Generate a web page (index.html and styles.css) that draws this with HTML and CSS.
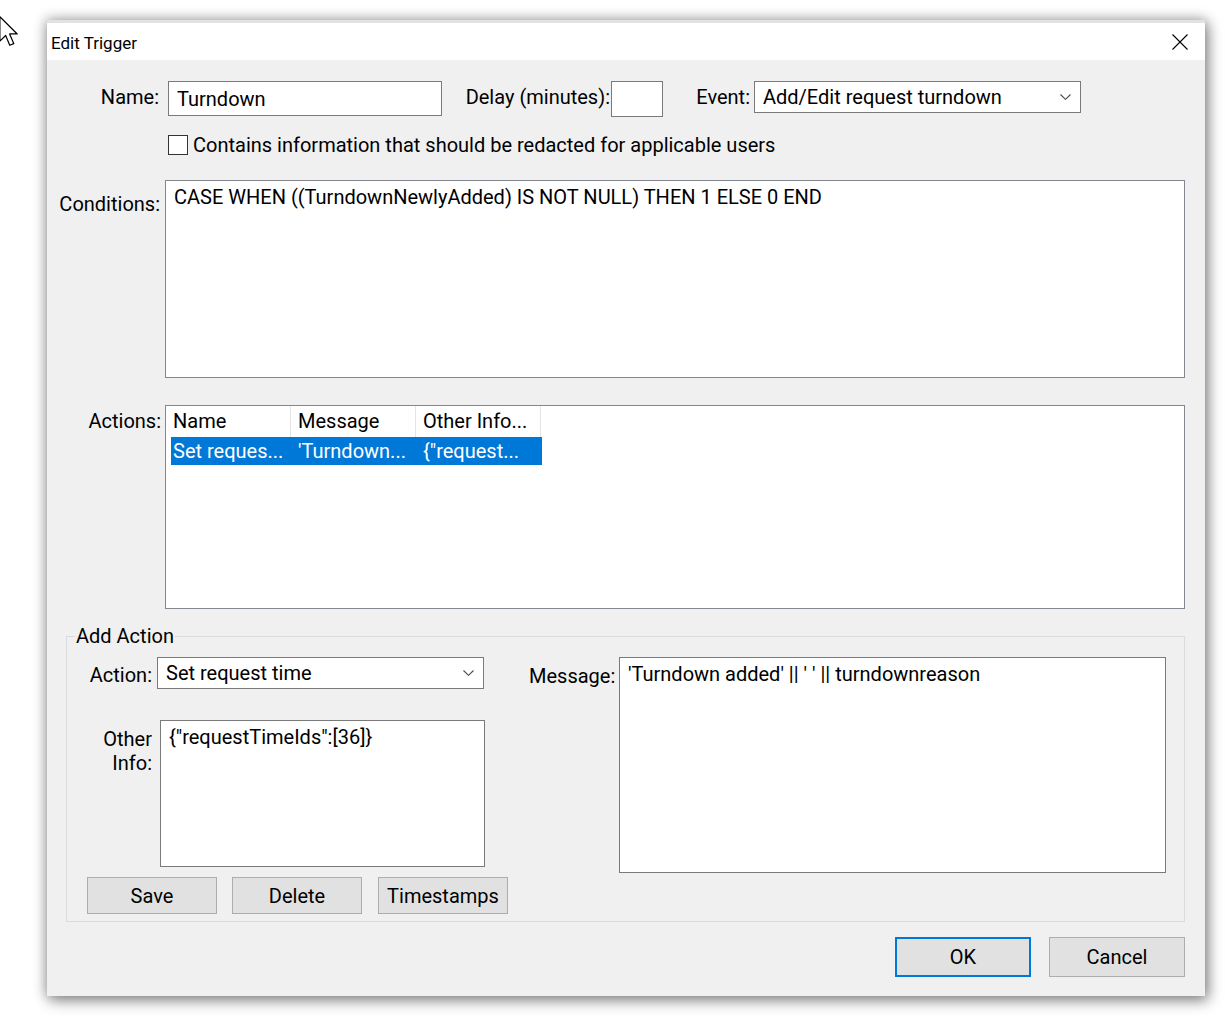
FILE: index.html
```html
<!DOCTYPE html>
<html lang="en">
<head>
    <meta charset="UTF-8">
    <meta name="viewport" content="width=device-width, initial-scale=1.0">
    <title>Edit Trigger</title>
    <link rel="stylesheet" href="styles.css">
</head>
<body>
    <!-- Mouse pointer resting at the screen edge -->
    <svg class="cursor" width="20" height="32" viewBox="0 0 13 21">
        <path d="M0.5 0.5 L0.5 16.5 L4.3 12.8 L7 19.2 L9.6 18.1 L6.9 11.8 L11.9 11.8 Z" fill="#fff" stroke="#000" stroke-width="0.8" stroke-linejoin="round"/>
    </svg>

    <div class="window">
        <div class="titlebar">
            <span class="title">Edit Trigger</span>
            <svg class="close" width="16" height="16" viewBox="0 0 16 16">
                <path d="M0.5 0.5 L15.5 15.5 M15.5 0.5 L0.5 15.5" stroke="#000" stroke-width="1.1"/>
            </svg>
        </div>

        <div class="client">
            <!-- Name / delay / event -->
            <div class="row-top">
                <label class="lbl lbl-name">Name:</label>
                <div class="textbox tb-name">Turndown</div>
                <label class="lbl lbl-delay">Delay (minutes):</label>
                <div class="textbox tb-delay"></div>
                <label class="lbl lbl-event">Event:</label>
                <div class="combo combo-event">
                    <span>Add/Edit request turndown</span>
                    <svg class="chevron" width="11" height="6" viewBox="0 0 11 6"><path d="M0.5 0.5 L5.5 5.3 L10.5 0.5" fill="none" stroke="#4a4a4a" stroke-width="1.1"/></svg>
                </div>
            </div>

            <div class="row-check">
                <span class="checkbox"></span>
                <span>Contains information that should be redacted for applicable users</span>
            </div>

            <div class="row-field row-conditions">
                <label class="lbl lbl-side">Conditions:</label>
                <div class="textarea tb-conditions">CASE WHEN ((TurndownNewlyAdded) IS NOT NULL) THEN 1 ELSE 0 END</div>
            </div>

            <div class="row-field row-actions">
                <label class="lbl lbl-side lbl-actions">Actions:</label>
                <div class="listview">
                    <div class="list-header">
                        <div class="col-head">Name</div>
                        <div class="col-head">Message</div>
                        <div class="col-head">Other Info...</div>
                    </div>
                    <div class="list-row selected">
                        <div class="cell">Set reques...</div>
                        <div class="cell">'Turndown...</div>
                        <div class="cell">{"request...</div>
                    </div>
                </div>
            </div>

            <fieldset class="group">
                <legend>Add Action</legend>
                <div class="group-cols">
                    <div class="group-left">
                        <div class="field field-action">
                            <label class="lbl lbl-group">Action:</label>
                            <div class="combo combo-action">
                                <span>Set request time</span>
                                <svg class="chevron" width="11" height="6" viewBox="0 0 11 6"><path d="M0.5 0.5 L5.5 5.3 L10.5 0.5" fill="none" stroke="#4a4a4a" stroke-width="1.1"/></svg>
                            </div>
                        </div>
                        <div class="field field-other">
                            <label class="lbl lbl-group lbl-other">Other<br>Info:</label>
                            <div class="textarea tb-other">{"requestTimeIds":[36]}</div>
                        </div>
                        <div class="group-buttons">
                            <button class="btn">Save</button>
                            <button class="btn">Delete</button>
                            <button class="btn btn-wide-gap">Timestamps</button>
                        </div>
                    </div>
                    <div class="group-right">
                        <label class="lbl lbl-message">Message:</label>
                        <div class="textarea tb-message">'Turndown added' || ' ' || turndownreason</div>
                    </div>
                </div>
            </fieldset>

            <div class="dialog-buttons">
                <button class="btn btn-dialog btn-default">OK</button>
                <button class="btn btn-dialog">Cancel</button>
            </div>
        </div>
    </div>
</body>
</html>
```
FILE: styles.css
```css
/* Page behind the dialog */
body {
    margin: 0;
    width: 1225px;
    height: 1016px;
    overflow: hidden;
    position: relative;
    background-color: #ffffff;
    font-family: Roboto, "Noto Sans", sans-serif;
    font-size: 20px;
    color: #000;
}

.cursor {
    position: absolute;
    left: -1px;
    top: 16px;
}

/* Dialog window */
.window {
    position: absolute;
    left: 47px;
    top: 20px;
    width: 1158px;
    height: 976px;
    background-color: #f0f0f0;
    box-shadow: 0 0 12px 1px rgba(0, 0, 0, 0.3), 3px 5px 14px rgba(0, 0, 0, 0.35);
}

.titlebar {
    height: 37px;
    border-top: 3px solid #e2e2e2;
    background-color: #ffffff;
    display: flex;
    align-items: center;
    justify-content: space-between;
    padding: 0 17px 0 4px;
}

.title {
    font-size: 17px;
    padding-top: 3px;
}

.close {
    display: block;
    margin-top: 1px;
}

.client {
    height: 936px;
}

/* Shared controls */
.lbl {
    display: block;
    text-align: right;
    line-height: 24px;
    white-space: nowrap;
}

.textbox,
.combo,
.textarea {
    box-sizing: border-box;
    background-color: #ffffff;
    border: 1px solid #7a7a7a;
    white-space: nowrap;
}

.textbox,
.combo {
    display: flex;
    align-items: center;
    padding-left: 8px;
}

.combo {
    justify-content: space-between;
    padding-right: 9px;
}

.chevron {
    display: block;
}

.textarea {
    padding: 4px 8px;
    line-height: 24px;
}

.btn {
    box-sizing: border-box;
    width: 130px;
    height: 37px;
    padding: 0;
    background-color: #e1e1e1;
    border: 1px solid #adadad;
    font-family: inherit;
    font-size: 20px;
    color: #000;
}

/* First row: name, delay and event */
.row-top {
    display: flex;
    align-items: flex-start;
    margin-top: 21px;
}

.row-top .lbl {
    line-height: 33px;
}

.lbl-name {
    width: 112px;
}

.tb-name {
    margin-left: 9px;
    width: 274px;
    height: 35px;
}

.lbl-delay {
    margin-left: 18px;
    width: 150px;
}

.tb-delay {
    margin-left: 1px;
    width: 52px;
    height: 36px;
}

.lbl-event {
    margin-left: 31px;
    width: 56px;
}

.combo-event {
    margin-left: 4px;
    width: 327px;
    height: 32px;
}

/* Redaction checkbox */
.row-check {
    display: flex;
    align-items: center;
    margin: 18px 0 0 121px;
    height: 20px;
}

.checkbox {
    box-sizing: border-box;
    width: 20px;
    height: 20px;
    margin-right: 5px;
    background-color: #ffffff;
    border: 1px solid #333333;
}

/* Conditions and actions */
.row-field {
    display: flex;
    align-items: flex-start;
}

.row-conditions {
    margin-top: 25px;
}

.lbl-side {
    width: 113px;
    padding-top: 12px;
}

.tb-conditions {
    margin-left: 5px;
    width: 1020px;
    height: 198px;
    border-color: #828790;
}

.row-actions {
    margin-top: 27px;
}

.lbl-actions {
    width: 114px;
    padding-top: 4px;
}

.listview {
    box-sizing: border-box;
    margin-left: 4px;
    width: 1020px;
    height: 204px;
    background-color: #ffffff;
    border: 1px solid #828790;
}

.list-header {
    display: flex;
    height: 31px;
}

.col-head {
    box-sizing: border-box;
    width: 125px;
    padding-left: 7px;
    line-height: 31px;
    border-right: 1px solid #e5e5e5;
}

.list-row {
    display: flex;
    margin-left: 5px;
    width: 371px;
    height: 28px;
    line-height: 28px;
}

.list-row.selected {
    background-color: #0078d7;
    color: #ffffff;
}

.cell {
    box-sizing: border-box;
    width: 125px;
    padding-left: 7px;
    white-space: nowrap;
}

.cell:first-child {
    width: 120px;
    padding-left: 2px;
}

.cell:last-child {
    width: 126px;
}

/* Add Action group box */
.group {
    box-sizing: border-box;
    margin: 15px 0 0 19px;
    width: 1119px;
    padding: 9px 0 7px 0;
    border: 1px solid #dcdcdc;
    min-width: 0;
}

.group legend {
    margin-left: 8px;
    padding: 0 1px;
    line-height: 24px;
}

.group-cols {
    display: flex;
    align-items: flex-start;
}

.group-left {
    width: 442px;
}

.field {
    display: flex;
    align-items: flex-start;
}

.lbl-group {
    width: 85px;
    padding-top: 6px;
}

.combo-action {
    margin-left: 5px;
    width: 327px;
    height: 32px;
}

.field-other {
    margin-top: 31px;
}

.lbl-other {
    padding-top: 7px;
}

.tb-other {
    margin-left: 8px;
    width: 325px;
    height: 147px;
}

.group-buttons {
    display: flex;
    gap: 15px;
    margin-top: 10px;
    padding-left: 20px;
}

.btn-wide-gap {
    margin-left: 1px;
}

.group-right {
    display: flex;
    align-items: flex-start;
    margin-left: 20px;
}

.lbl-message {
    width: 83px;
    padding-top: 7px;
}

.tb-message {
    margin-left: 7px;
    width: 547px;
    height: 216px;
}

/* OK / Cancel */
.dialog-buttons {
    display: flex;
    justify-content: flex-end;
    gap: 18px;
    margin-top: 15px;
    padding-right: 20px;
}

.btn-dialog {
    width: 136px;
    height: 40px;
}

.btn-default {
    border: 2px solid #0078d7;
}
```
